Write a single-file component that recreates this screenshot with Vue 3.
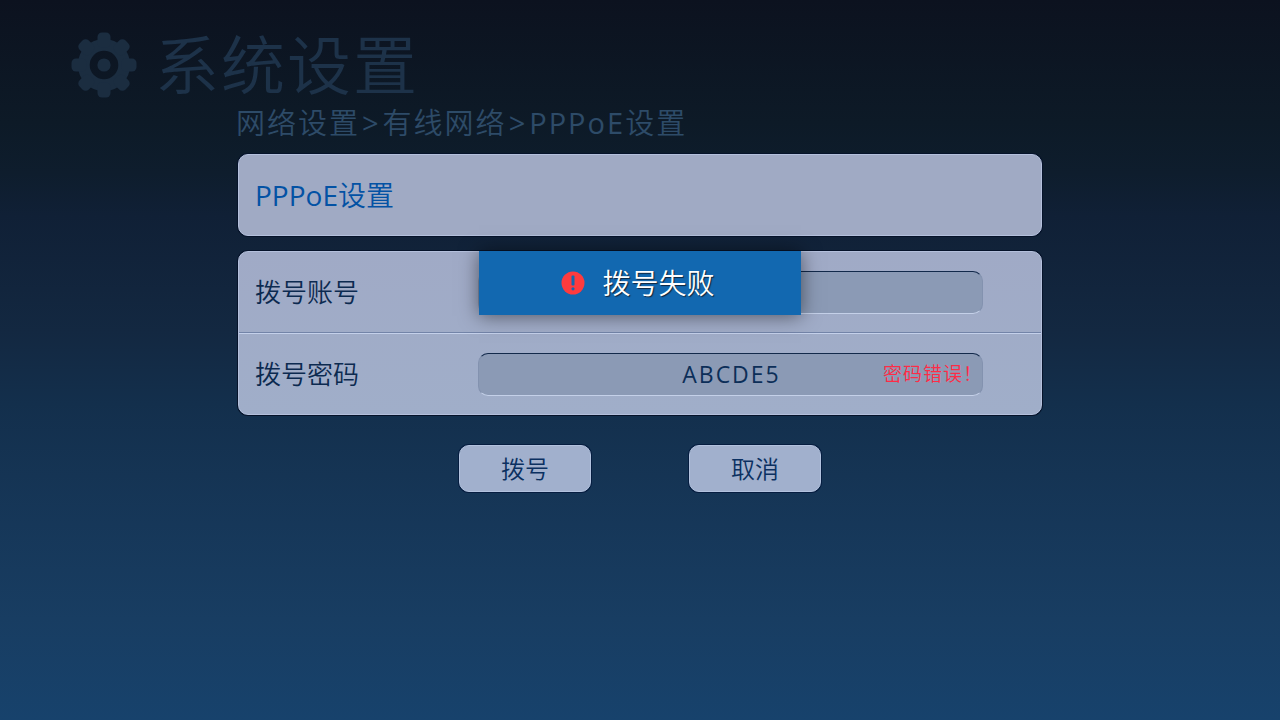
<script setup>
import { ref } from 'vue'

const account = ref('')
const password = ref('ABCDE5')
const teeth = [0, 45, 90, 135, 180, 225, 270, 315]
</script>

<template>
  <div class="screen">
    <header class="header">
      <svg class="gear" viewBox="-33 -33 66 66" aria-hidden="true">
        <circle r="20.2" fill="none" stroke="#1b2d40" stroke-width="11.8" />
        <rect
          v-for="angle in teeth"
          :key="angle"
          x="-6.5"
          y="-32.5"
          width="13"
          height="15"
          rx="4.5"
          fill="#1b2d40"
          :transform="`rotate(${angle})`"
        />
        <circle r="6.6" fill="#1b2d40" />
      </svg>
      <h1 class="title">系统设置</h1>
    </header>

    <main class="content">
      <nav class="crumbs">网络设置<span class="latin sep">&gt;</span>有线网络<span class="latin sep">&gt;</span><span class="latin">PPPoE</span>设置</nav>

      <section class="card heading">
        <h2><span class="latin">PPPoE</span>设置</h2>
      </section>

      <form class="form" @submit.prevent>
        <div class="card fields">
          <div class="row">
            <label for="account">拨号账号</label>
            <div class="field">
              <input id="account" v-model="account" type="text" />
            </div>
          </div>
          <div class="row">
            <label for="password">拨号密码</label>
            <div class="field">
              <input id="password" v-model="password" type="text" aria-describedby="password-error" />
              <span id="password-error" class="error">密码错误！</span>
            </div>
          </div>
        </div>

        <div class="toast" role="alert">
          <svg class="alert" viewBox="0 0 24 24" aria-hidden="true">
            <circle cx="12" cy="12" r="11.5" fill="#fe3b3e" />
            <rect x="10.5" y="4.5" width="3" height="10" rx="1" fill="#1268b0" />
            <circle cx="12" cy="17.8" r="1.6" fill="#1268b0" />
          </svg>
          <span>拨号失败</span>
        </div>

        <div class="actions">
          <button type="submit">拨号</button>
          <button type="button">取消</button>
        </div>
      </form>
    </main>
  </div>
</template>

<style>
body {
  margin: 0;
  background: #0c131f;
}
</style>

<style scoped>
.screen {
  box-sizing: border-box;
  min-height: 100vh;
  padding-top: 29px;
  font-family: "Open Sans", "Noto Sans CJK SC", sans-serif;
  font-weight: 350;
  background: linear-gradient(
    #0c121f 0%,
    #0d1a27 17%,
    #0e1d2d 24%,
    #102036 30%,
    #132841 46%,
    #132f4c 56%,
    #153454 66%,
    #183d62 86%,
    #17426c 100%
  );
}

.latin {
  font-weight: 400;
}

.header {
  display: flex;
  align-items: center;
  gap: 18px;
  padding-left: 71px;
}

.gear {
  width: 66px;
  height: 66px;
}

.title {
  margin: 0;
  font-size: 64px;
  font-weight: inherit;
  line-height: 72px;
  letter-spacing: 2px;
  color: #1d3249;
}

.content {
  max-width: 804px;
  margin: 0 auto;
}

.crumbs {
  margin: 1px 0 10px -2px;
  font-size: 29px;
  line-height: 42px;
  letter-spacing: 2px;
  white-space: nowrap;
  color: #2d4b68;
}

.sep {
  margin: 0 2px;
}

.card {
  box-sizing: border-box;
  border: 1px solid #b4c0dc;
  border-radius: 10px;
  background: #a0aac4;
  box-shadow: 0 0 0 1px #06132a;
}

.heading {
  display: flex;
  align-items: center;
  min-height: 82px;
  padding: 0 16px;
}

.heading h2 {
  margin: 0;
  font-size: 28px;
  font-weight: inherit;
  line-height: 40px;
  color: #0352a4;
}

.form {
  position: relative;
  margin-top: 15px;
}

.fields {
  background: linear-gradient(#a0aac6, #a0aec9);
}

.row {
  display: grid;
  grid-template-columns: 223px 1fr;
  align-items: center;
  height: 80px;
  padding: 0 58px 0 16px;
}

.row + .row {
  padding-top: 1px;
  border-top: 1px solid #7384a8;
  box-shadow: inset 0 1px 0 #c4d0ea;
}

.row label {
  font-size: 26px;
  line-height: 40px;
  color: #0c2a50;
}

.field {
  position: relative;
}

.field input {
  display: block;
  box-sizing: border-box;
  width: 100%;
  height: 43px;
  padding: 0 0 0 2px;
  border: 1px solid #8392af;
  border-top-color: #12294a;
  border-bottom-color: #c4d0e8;
  border-radius: 10px;
  outline: none;
  background: #8b9ab5;
  font-family: inherit;
  font-size: 23px;
  font-weight: 400;
  letter-spacing: 2px;
  text-align: center;
  color: #0c2e58;
}

.error {
  position: absolute;
  top: 0;
  right: 0;
  font-size: 19px;
  line-height: 42px;
  letter-spacing: 1px;
  color: #ff2b45;
}

.toast {
  position: absolute;
  top: 0;
  left: 30%;
  right: 30%;
  display: flex;
  align-items: center;
  justify-content: center;
  gap: 17px;
  box-sizing: border-box;
  height: 64px;
  padding-right: 4px;
  background: #1268b0;
  box-shadow: 0 1px 18px rgba(0, 0, 0, 0.5);
  font-size: 28px;
  line-height: 40px;
  color: #fff;
  text-shadow: 1px 1px 1px #10253c;
}

.alert {
  width: 24px;
  height: 24px;
}

.actions {
  display: flex;
  justify-content: center;
  gap: 98px;
  margin-top: 30px;
}

.actions button {
  width: 132px;
  height: 47px;
  padding: 0;
  border: 1px solid #b2c2de;
  border-radius: 10px;
  background: #a1b0cd;
  box-shadow: 0 0 0 1px #061d40;
  font-family: inherit;
  font-size: 24px;
  font-weight: inherit;
  line-height: 40px;
  color: #0b3061;
}
</style>
